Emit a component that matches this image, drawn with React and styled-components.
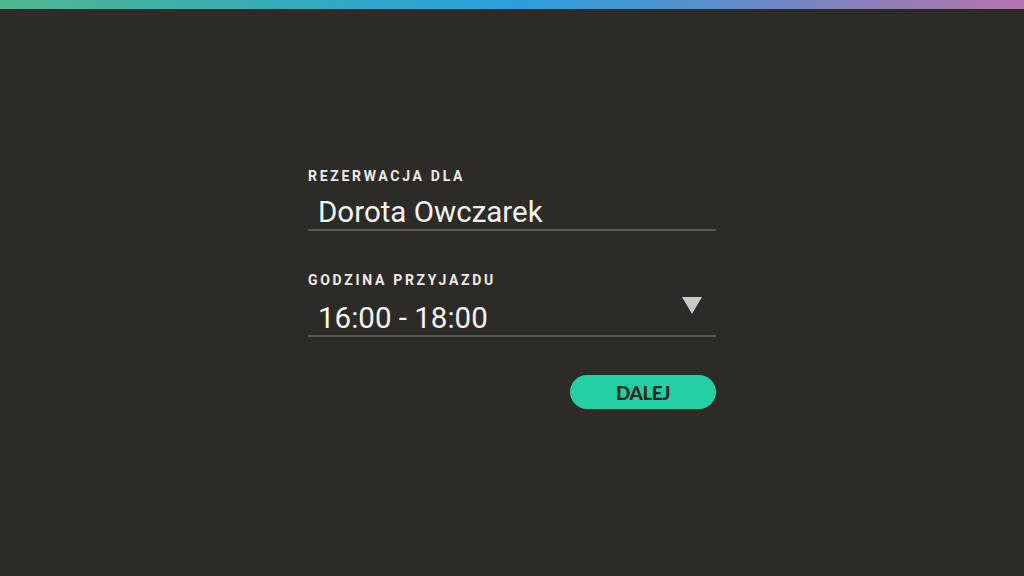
import React from "react";
import styled, { createGlobalStyle } from "styled-components";

const GlobalStyle = createGlobalStyle`
  html, body {
    margin: 0;
    padding: 0;
    height: 100%;
    background: #2d2b28;
  }
  #root {
    height: 100%;
  }
`;

const Page = styled.div`
  width: 1024px;
  height: 576px;
  display: flex;
  flex-direction: column;
  background: #2d2b28;
  font-family: Roboto, "Liberation Sans", sans-serif;
`;

const TopBar = styled.div`
  height: 9px;
  flex-shrink: 0;
  background: linear-gradient(90deg, #4fb78d 0%, #35a9bf 30%, #2a9fdc 50%, #5b8fc9 70%, #8b7fba 85%, #b874b0 100%);
`;

const Center = styled.div`
  flex: 1;
  display: flex;
  align-items: center;
  justify-content: center;
  padding-bottom: 8px;
`;

const Form = styled.div`
  width: 408px;
  display: flex;
  flex-direction: column;
`;

const Label = styled.div`
  font-size: 14px;
  font-weight: 700;
  letter-spacing: 2.7px;
  color: #ececea;
  line-height: 16px;
`;

const Field = styled.div`
  display: flex;
  align-items: flex-end;
  justify-content: space-between;
  height: 34px;
  border-bottom: 2px solid #5a5855;
  padding: 0 10px;
  margin-top: ${(p) => p.$top}px;
  margin-bottom: ${(p) => p.$bottom}px;
`;

const Value = styled.div`
  font-size: 29.5px;
  color: #f4f4f2;
  line-height: 34px;
`;

const Arrow = styled.div`
  align-self: flex-start;
  width: 0;
  height: 0;
  border-left: 10px solid transparent;
  border-right: 10px solid transparent;
  border-top: 17px solid #c9c9c7;
  margin-top: -4px;
  margin-right: 4px;
`;

const Actions = styled.div`
  display: flex;
  justify-content: flex-end;
`;

const Button = styled.button`
  width: 146px;
  height: 34px;
  border: none;
  border-radius: 17px;
  background: #23cfa3;
  color: #2b2a27;
  font-family: Lato, "Open Sans", sans-serif;
  font-weight: 900;
  font-size: 19px;
  letter-spacing: -0.5px;
  cursor: pointer;
  padding: 0;
`;

export default function App() {
  return (
    <>
      <GlobalStyle />
      <Page>
        <TopBar />
        <Center>
          <Form>
            <Label>REZERWACJA DLA</Label>
            <Field $top={11} $bottom={41}>
              <Value>Dorota Owczarek</Value>
            </Field>
            <Label>GODZINA PRZYJAZDU</Label>
            <Field $top={13} $bottom={38}>
              <Value>16:00 - 18:00</Value>
              <Arrow />
            </Field>
            <Actions>
              <Button>DALEJ</Button>
            </Actions>
          </Form>
        </Center>
      </Page>
    </>
  );
}
